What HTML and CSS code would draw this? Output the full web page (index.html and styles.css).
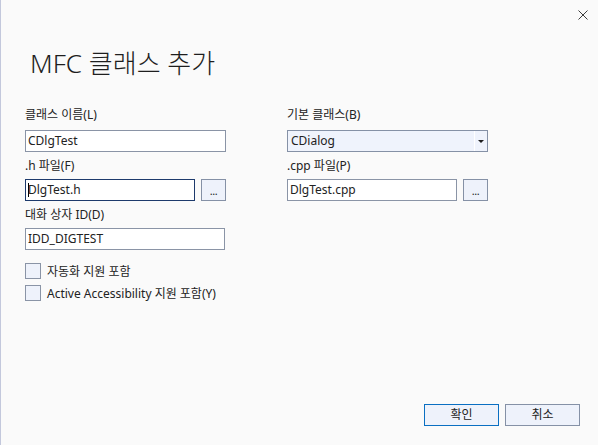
FILE: index.html
```html
<!DOCTYPE html>
<html lang="ko">
<head>
<meta charset="utf-8">
<link rel="stylesheet" href="styles.css">
</head>
<body>
<div class="dialog">
  <div class="titlebar">
    <span class="close" aria-label="닫기">
      <svg width="10" height="10" viewBox="0 0 10 10"><path d="M0.5 0.5 L9.5 9.5 M9.5 0.5 L0.5 9.5" stroke="#3c3c3c" stroke-width="1" fill="none"/></svg>
    </span>
  </div>
  <h1 class="title">MFC 클래스 추가</h1>
  <div class="form">
    <div class="col">
      <div class="label first">클래스 이름(L)</div>
      <div class="field full">CDlgTest</div>
      <div class="label">.h 파일(F)</div>
      <div class="pair">
        <div class="field short focused"><span class="caret"></span>DlgTest.h</div>
        <div class="browse">...</div>
      </div>
      <div class="label">대화 상자 ID(D)</div>
      <div class="field id">IDD_DIGTEST</div>
    </div>
    <div class="col">
      <div class="label first">기본 클래스(B)</div>
      <div class="combo">
        <span class="combo-text">CDialog</span>
        <span class="combo-btn"><span class="arrow"></span></span>
      </div>
      <div class="label">.cpp 파일(P)</div>
      <div class="pair">
        <div class="field short">DlgTest.cpp</div>
        <div class="browse">...</div>
      </div>
    </div>
  </div>
  <div class="checks">
    <div class="check"><span class="box"></span><span>자동화 지원 포함</span></div>
    <div class="check"><span class="box"></span><span>Active Accessibility 지원 포함(Y)</span></div>
  </div>
  <div class="actions">
    <div class="btn primary">확인</div>
    <div class="btn">취소</div>
  </div>
</div>
</body>
</html>
```

FILE: styles.css
```css
* { box-sizing: border-box; }
html, body {
  margin: 0;
  padding: 0;
  width: 598px;
  height: 445px;
  overflow: hidden;
  background: #fafafa;
}
body {
  font-family: "Noto Sans", "Noto Sans CJK KR", sans-serif;
  font-size: 12px;
  color: #222222;
}
.dialog {
  height: 445px;
  border-left: 1px solid #c3c8dc;
  padding-left: 24px;
  display: flex;
  flex-direction: column;
}
.titlebar {
  height: 30px;
  display: flex;
  justify-content: flex-end;
  padding-top: 10px;
  padding-right: 10px;
}
.close {
  width: 10px;
  height: 10px;
  display: block;
}
.close svg { display: block; }
.title {
  margin: 17px 0 0 5px;
  font-size: 26px;
  font-weight: 300;
  line-height: 32px;
  height: 32px;
  color: #1e1e1e;
  white-space: nowrap;
  font-family: "Noto Sans", "Noto Sans CJK KR", sans-serif;
}
.form {
  margin-top: 28px;
  display: grid;
  grid-template-columns: 201px 201px;
  column-gap: 61px;
}
.col { display: flex; flex-direction: column; }
.label {
  line-height: 16px;
  height: 16px;
  margin-top: 6px;
  margin-bottom: 5px;
  white-space: nowrap;
}
.label.first {
  margin-top: 0;
  margin-bottom: 7px;
}
.field {
  height: 22px;
  border: 1px solid #8a94a6;
  background: #ffffff;
  padding-left: 2px;
  line-height: 20px;
  white-space: nowrap;
  display: flex;
  align-items: center;
}
.field.full { width: 201px; }
.field.id { width: 200px; }
.field.short { width: 170px; }
.field.focused { border-color: #1d3a6c; }
.caret {
  width: 1px;
  height: 14px;
  background: #000;
  margin-right: -1px;
}
.pair {
  display: flex;
  gap: 6px;
}
.browse {
  width: 25px;
  height: 22px;
  border: 1px solid #8591a6;
  background: #eef2fb;
  text-align: center;
  line-height: 22px;
  font-size: 11px;
  letter-spacing: -0.5px;
}
.combo {
  width: 201px;
  height: 22px;
  border: 1px solid #8591a6;
  background: #eff3fc;
  display: flex;
  align-items: stretch;
}
.combo-text {
  flex: 1;
  padding-left: 3px;
  line-height: 20px;
}
.combo-btn {
  width: 13px;
  border-left: 1px solid #ffffff;
  display: flex;
  align-items: center;
  justify-content: center;
}
.arrow {
  width: 0;
  height: 0;
  border-left: 3px solid transparent;
  border-right: 3px solid transparent;
  border-top: 3px solid #1e1e1e;
  margin-left: -1px;
}
.checks {
  margin-top: 13px;
  display: flex;
  flex-direction: column;
  gap: 6px;
}
.check {
  display: flex;
  align-items: center;
  gap: 6px;
  height: 16px;
  white-space: nowrap;
}
.box {
  width: 16px;
  height: 16px;
  border: 1px solid #8a94a6;
  background: #eef2fb;
  flex: none;
}
.actions {
  margin-top: auto;
  margin-bottom: 19px;
  margin-right: 18px;
  display: flex;
  justify-content: flex-end;
  gap: 6px;
}
.btn {
  width: 75px;
  height: 22px;
  border: 1px solid #8591a6;
  background: #eef2fb;
  text-align: center;
  line-height: 20px;
}
.btn.primary {
  border-color: #0a6fc2;
}
```
